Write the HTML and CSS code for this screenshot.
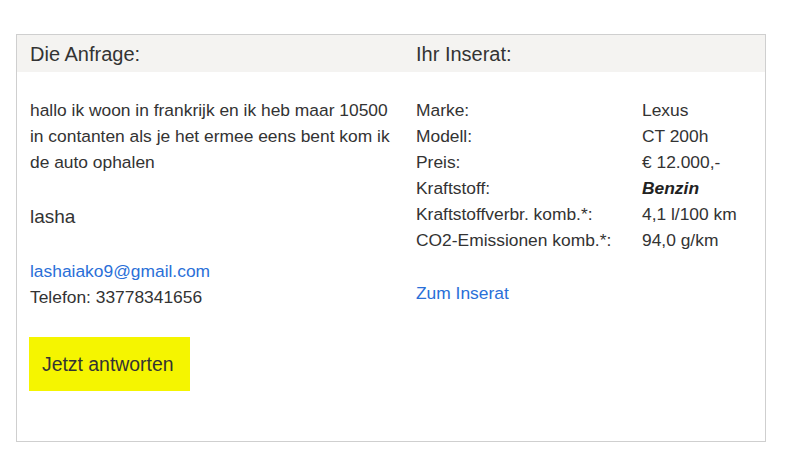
FILE: index.html
```html
<!DOCTYPE html>
<html lang="de">
<head>
<meta charset="utf-8">
<title>Anfrage</title>
<link rel="stylesheet" href="styles.css">
</head>
<body>
<div class="box">
  <div class="head">
    <div class="head-cell">Die Anfrage:</div>
    <div class="head-cell right">Ihr Inserat:</div>
  </div>
  <div class="body">
    <div class="col left">
      <p class="msg">hallo ik woon in frankrijk en ik heb maar 10500 in contanten als je het ermee eens bent kom ik de auto ophalen</p>
      <p class="name">lasha</p>
      <p class="contact"><a href="#" class="link">lashaiako9@gmail.com</a><br>Telefon: 33778341656</p>
      <a href="#" class="btn">Jetzt antworten</a>
    </div>
    <div class="col right">
      <table class="specs">
        <tr><td class="lab">Marke:</td><td>Lexus</td></tr>
        <tr><td class="lab">Modell:</td><td>CT 200h</td></tr>
        <tr><td class="lab">Preis:</td><td>€ 12.000,-</td></tr>
        <tr><td class="lab">Kraftstoff:</td><td><b><i>Benzin</i></b></td></tr>
        <tr><td class="lab">Kraftstoffverbr. komb.*:</td><td>4,1 l/100 km</td></tr>
        <tr><td class="lab">CO2-Emissionen komb.*:</td><td>94,0 g/km</td></tr>
      </table>
      <a href="#" class="link more">Zum Inserat</a>
    </div>
  </div>
</div>
</body>
</html>
```

FILE: styles.css
```css
html, body {
  margin: 0;
  padding: 0;
  background: #fff;
}
body {
  font-family: "Liberation Sans", Arial, sans-serif;
  color: #333;
  font-size: 17.4px;
  line-height: 26px;
}
.box {
  margin: 34px 0 0 16px;
  width: 748px;
  height: 406px;
  border: 1px solid #cfcfcf;
  display: flex;
  flex-direction: column;
}
.head {
  display: grid;
  grid-template-columns: 386px 1fr;
  background: #f4f3f1;
  height: 37px;
  align-items: center;
}
.head-cell {
  padding-left: 13px;
  font-size: 20px;
  line-height: 24px;
  color: #333;
}
.body {
  display: grid;
  grid-template-columns: 386px 1fr;
  padding-top: 25px;
}
.col {
  padding: 0 10px 0 13px;
}
p {
  margin: 0;
}
.msg {
  margin-bottom: 29px;
}
.name {
  font-size: 19px;
  margin-bottom: 28px;
}
.contact {
  margin-bottom: 27px;
}
.link {
  color: #2a6fd8;
  text-decoration: none;
}
.btn {
  display: inline-block;
  background: #f5f500;
  color: #333;
  text-decoration: none;
  font-size: 19.4px;
  line-height: 54px;
  padding: 0 14px 0 13px;
  margin-left: -1px;
  min-width: 134px;
  text-align: left;
}
.specs {
  border-collapse: collapse;
  border-spacing: 0;
}
.specs td {
  padding: 0;
  line-height: 26px;
  vertical-align: top;
}
.specs td.lab {
  width: 226px;
}
.specs b {
  color: #222;
}
.more {
  display: block;
  width: fit-content;
  margin-top: 27px;
}
```
